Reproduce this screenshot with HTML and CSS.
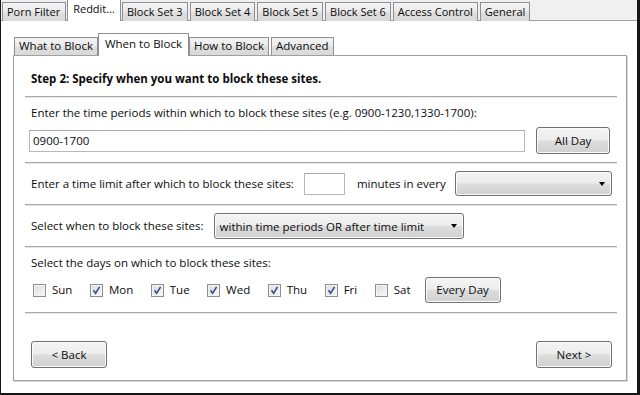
FILE: index.html
```html
<!DOCTYPE html>
<html>
<head>
<meta charset="utf-8">
<link rel="stylesheet" href="styles.css">
</head>
<body>
<div class="window">
  <div class="tabbar">
    <div class="tab">Porn Filter</div>
    <div class="tab active">Reddit...</div>
    <div class="tab">Block Set 3</div>
    <div class="tab">Block Set 4</div>
    <div class="tab">Block Set 5</div>
    <div class="tab">Block Set 6</div>
    <div class="tab">Access Control</div>
    <div class="tab">General</div>
  </div>
  <div class="page">
    <div class="subtabs">
      <div class="subtab">What to Block</div>
      <div class="subtab active">When to Block</div>
      <div class="subtab">How to Block</div>
      <div class="subtab">Advanced</div>
    </div>
    <div class="panel">
      <div class="sec sec-title">
        <div class="title">Step 2: Specify when you want to block these sites.</div>
      </div>
      <div class="sep"></div>
      <div class="sec sec-periods">
        <div class="label">Enter the time periods within which to block these sites (e.g. 0900-1230,1330-1700):</div>
        <div class="row row-periods">
          <div class="textbox wide">0900-1700</div>
          <div class="btn btn-allday">All Day</div>
        </div>
      </div>
      <div class="sep"></div>
      <div class="sec sec-limit">
        <div class="row">
          <div class="label">Enter a time limit after which to block these sites:</div>
          <div class="textbox small"></div>
          <div class="label minutes">minutes in every</div>
          <div class="combo combo-every"><span class="combo-text"></span><span class="arrow"></span></div>
        </div>
      </div>
      <div class="sep"></div>
      <div class="sec sec-mode">
        <div class="row">
          <div class="label">Select when to block these sites:</div>
          <div class="combo combo-mode"><span class="combo-text">within time periods OR after time limit</span><span class="arrow"></span></div>
        </div>
      </div>
      <div class="sep"></div>
      <div class="sec sec-days">
        <div class="label">Select the days on which to block these sites:</div>
        <div class="row days">
          <div class="day"><span class="cb"></span><span class="day-name">Sun</span></div>
          <div class="day"><span class="cb checked"><svg viewBox="0 0 13 13" width="13" height="13"><path d="M3.5 6.2 L5.6 9.2 L9.6 2.8" fill="none" stroke="#3b4f8c" stroke-width="1.6"/></svg></span><span class="day-name">Mon</span></div>
          <div class="day"><span class="cb checked"><svg viewBox="0 0 13 13" width="13" height="13"><path d="M3.5 6.2 L5.6 9.2 L9.6 2.8" fill="none" stroke="#3b4f8c" stroke-width="1.6"/></svg></span><span class="day-name">Tue</span></div>
          <div class="day"><span class="cb checked"><svg viewBox="0 0 13 13" width="13" height="13"><path d="M3.5 6.2 L5.6 9.2 L9.6 2.8" fill="none" stroke="#3b4f8c" stroke-width="1.6"/></svg></span><span class="day-name">Wed</span></div>
          <div class="day"><span class="cb checked"><svg viewBox="0 0 13 13" width="13" height="13"><path d="M3.5 6.2 L5.6 9.2 L9.6 2.8" fill="none" stroke="#3b4f8c" stroke-width="1.6"/></svg></span><span class="day-name">Thu</span></div>
          <div class="day"><span class="cb checked"><svg viewBox="0 0 13 13" width="13" height="13"><path d="M3.5 6.2 L5.6 9.2 L9.6 2.8" fill="none" stroke="#3b4f8c" stroke-width="1.6"/></svg></span><span class="day-name">Fri</span></div>
          <div class="day"><span class="cb"></span><span class="day-name">Sat</span></div>
          <div class="btn btn-everyday">Every Day</div>
        </div>
      </div>
      <div class="sep"></div>
      <div class="sec sec-nav">
        <div class="btn btn-nav">&lt; Back</div>
        <div class="btn btn-nav">Next &gt;</div>
      </div>
    </div>
  </div>
</div>
</body>
</html>
```
FILE: styles.css
```css
* { box-sizing: border-box; }
html, body {
  margin: 0;
  padding: 0;
  width: 640px;
  height: 395px;
  overflow: hidden;
  background: #ffffff;
}
body {
  font-family: "Open Sans", "Noto Sans", sans-serif;
  font-size: 11.5px;
  color: #0c0c0c;
}
.window {
  width: 640px;
  height: 395px;
  border-left: 1px solid #151515;
  border-right: 3px solid #151515;
  border-bottom: 2px solid #151515;
  background: #fff;
}
.tabbar {
  height: 21px;
  background: #f0f0f0;
  border-bottom: 1px solid #a3a3a3;
  display: flex;
  align-items: flex-end;
  padding-left: 1px;
}
.tab {
  height: 19px;
  line-height: 17px;
  padding: 0 4px;
  margin-bottom: -1px;
  margin-right: 2px;
  border: 1px solid #8e8f94;
  border-bottom: none;
  background: linear-gradient(#f3f3f3, #ebebeb 45%, #dedede 55%, #d9d9d9);
  font-size: 11px;
  white-space: nowrap;
}
.tab:first-child { padding: 0 5px 0 4px; }
.tab.active {
  height: 22px;
  line-height: 18px;
  background: #fff;
  margin-left: -1px;
  margin-right: 1px;
  position: relative;
  z-index: 1;
  padding: 0 5px;
}
.page {
  padding-top: 12px;
}
.subtabs {
  height: 22px;
  display: flex;
  align-items: flex-end;
  margin-left: 13px;
}
.subtab {
  height: 18px;
  line-height: 16px;
  padding: 0 4px;
  margin-right: 2px;
  border: 1px solid #8e8f94;
  border-bottom: none;
  background: linear-gradient(#f3f3f3, #ebebeb 45%, #dedede 55%, #d9d9d9);
  font-size: 11.5px;
  white-space: nowrap;
  margin-bottom: 0;
}
.subtab.active {
  height: 23px;
  line-height: 20px;
  background: #fff;
  margin-left: -2px;
  margin-right: 0;
  margin-bottom: -1px;
  position: relative;
  z-index: 1;
  padding: 0 6px;
}
.panel {
  margin-left: 12px;
  width: 614px;
  border: 1px solid #a0a0a0;
  box-shadow: 1px 1px 0 #d8d8d8;
  padding: 0 9px 0 11px;
}
.sep {
  height: 2px;
  border-top: 1px solid #a9a9a9;
  border-bottom: 1px solid #e6e6e6;
}
.sec {
  padding: 0 5px 0 6px;
}
.label {
  line-height: 16px;
  white-space: nowrap;
}
.title {
  font-weight: bold;
  line-height: 16px;
  font-size: 11.5px;
}
.sec-title { padding-top: 15px; padding-bottom: 9px; }
.sec-periods { padding-top: 7px; padding-bottom: 8px; }
.sec-limit { padding-top: 7px; padding-bottom: 8px; }
.sec-mode { padding-top: 7px; padding-bottom: 7px; }
.sec-days { padding-top: 7px; padding-bottom: 9px; }
.sec-nav {
  padding-top: 27px;
  padding-bottom: 12px;
  display: flex;
  justify-content: space-between;
}
.row {
  display: flex;
  align-items: center;
}
.row-periods {
  margin-top: 6px;
  height: 27px;
  margin-left: -2px;
  padding-right: 2px;
}
.textbox {
  height: 22px;
  line-height: 20px;
  border: 1px solid #b5b8bf;
  border-top-color: #a4a7ae;
  background: #fff;
  padding: 0 3px;
}
.textbox.wide {
  flex: 1;
  margin-right: 11px;
}
.textbox.small {
  width: 41px;
  margin-left: 10px;
}
.minutes {
  margin-left: 12px;
}
.btn {
  height: 27px;
  line-height: 25px;
  text-align: center;
  border: 1px solid #707070;
  border-radius: 3px;
  background: linear-gradient(#f4f4f4, #ececec 48%, #dddddd 52%, #d0d0d0);
  box-shadow: inset 0 0 0 1px #fbfbfb;
  font-size: 11.5px;
  white-space: nowrap;
}
.btn-allday { width: 74px; }
.btn-everyday { width: 76px; height: 26px; line-height: 24px; margin-left: 14px; }
.btn-nav { width: 76px; }
.combo {
  display: flex;
  align-items: center;
  justify-content: space-between;
  border: 1px solid #707070;
  border-radius: 3px;
  background: linear-gradient(#f4f4f4, #ececec 48%, #dddddd 52%, #d0d0d0);
  box-shadow: inset 0 0 0 1px #fbfbfb;
  padding: 0 6px 0 5px;
}
.combo-every {
  flex: 1;
  height: 25px;
  margin-left: 9px;
}
.combo-mode {
  width: 250px;
  height: 26px;
  margin-left: 10px;
}
.combo-text { white-space: nowrap; }
.arrow {
  width: 0;
  height: 0;
  border-left: 3.5px solid transparent;
  border-right: 3.5px solid transparent;
  border-top: 4px solid #000;
}
.days {
  margin-top: 6px;
  height: 26px;
}
.day {
  display: flex;
  align-items: center;
  margin-right: 17.5px;
}
.day:first-child { margin-left: 2px; }
.day:nth-child(7) { margin-right: 0; }
.cb {
  width: 13px;
  height: 13px;
  border: 1px solid #8f8f8f;
  background: linear-gradient(135deg, #dcdcdc, #f8f8f8);
  box-shadow: inset 0 0 0 1px #f4f4f4;
  position: relative;
  margin-right: 6px;
}
.cb svg {
  position: absolute;
  left: -1px;
  top: -1px;
}
.day-name { line-height: 16px; font-size: 11.5px; }
```
